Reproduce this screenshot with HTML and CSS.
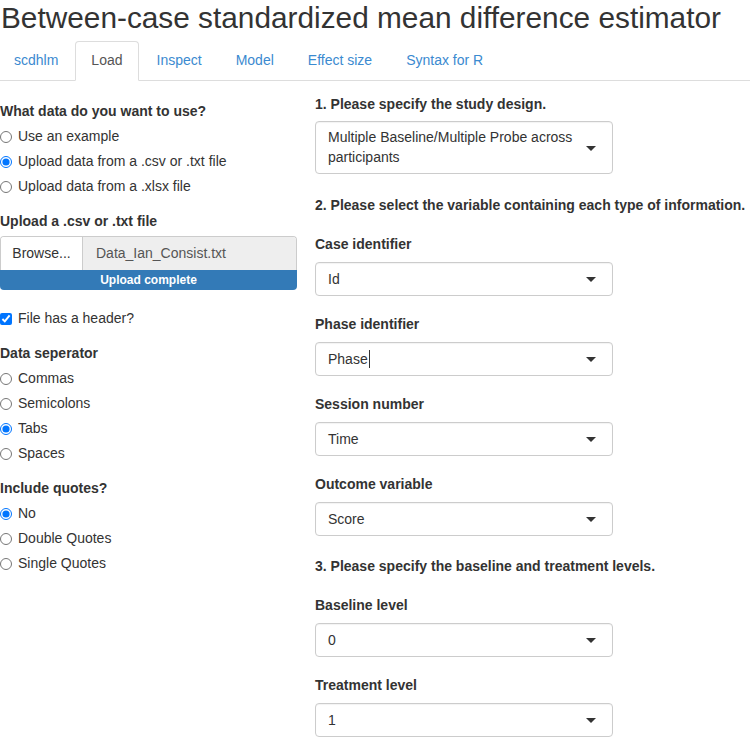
FILE: index.html
```html
<!DOCTYPE html>
<html lang="en">
<head>
  <meta charset="UTF-8">
  <title>Between-case SMD estimator</title>
  <link rel="stylesheet" href="styles.css">
</head>
<body>

  <h1 class="title">Between-case standardized mean difference estimator</h1>

  <!-- Tab bar -->
  <ul class="nav-tabs">
    <li><a href="#">scdhlm</a></li>
    <li class="active"><a href="#">Load</a></li>
    <li><a href="#">Inspect</a></li>
    <li><a href="#">Model</a></li>
    <li><a href="#">Effect size</a></li>
    <li><a href="#">Syntax for R</a></li>
  </ul>

  <div class="tab-content">

    <!-- Left: data source options -->
    <div class="sidebar">
      <div class="form-group">
        <label class="control-label">What data do you want to use?</label>
        <div class="radio"><label><input type="radio" name="source"> Use an example</label></div>
        <div class="radio"><label><input type="radio" name="source" checked> Upload data from a .csv or .txt file</label></div>
        <div class="radio"><label><input type="radio" name="source"> Upload data from a .xlsx file</label></div>
      </div>

      <div class="form-group upload">
        <label class="control-label">Upload a .csv or .txt file</label>
        <div class="file-input">
          <span class="btn-browse">Browse...</span>
          <span class="file-name">Data_Ian_Consist.txt</span>
        </div>
        <div class="progress">Upload complete</div>
      </div>

      <div class="form-group">
        <div class="checkbox"><label><input type="checkbox" checked> File has a header?</label></div>
      </div>

      <div class="form-group">
        <label class="control-label">Data seperator</label>
        <div class="radio"><label><input type="radio" name="sep"> Commas</label></div>
        <div class="radio"><label><input type="radio" name="sep"> Semicolons</label></div>
        <div class="radio"><label><input type="radio" name="sep" checked> Tabs</label></div>
        <div class="radio"><label><input type="radio" name="sep"> Spaces</label></div>
      </div>

      <div class="form-group">
        <label class="control-label">Include quotes?</label>
        <div class="radio"><label><input type="radio" name="quote" checked> No</label></div>
        <div class="radio"><label><input type="radio" name="quote"> Double Quotes</label></div>
        <div class="radio"><label><input type="radio" name="quote"> Single Quotes</label></div>
      </div>
    </div>

    <!-- Right: variable mapping -->
    <div class="main">
      <h4>1. Please specify the study design.</h4>
      <div class="select two-line">
        <span>Multiple Baseline/Multiple Probe across participants</span>
        <i class="caret"></i>
      </div>

      <h4>2. Please select the variable containing each type of information.</h4>

      <label class="control-label">Case identifier</label>
      <div class="select"><span>Id</span><i class="caret"></i></div>

      <label class="control-label">Phase identifier</label>
      <div class="select"><span>Phase<span class="cursor"></span></span><i class="caret"></i></div>

      <label class="control-label">Session number</label>
      <div class="select"><span>Time</span><i class="caret"></i></div>

      <label class="control-label">Outcome variable</label>
      <div class="select"><span>Score</span><i class="caret"></i></div>

      <h4 class="levels">3. Please specify the baseline and treatment levels.</h4>

      <label class="control-label">Baseline level</label>
      <div class="select"><span>0</span><i class="caret"></i></div>

      <label class="control-label">Treatment level</label>
      <div class="select"><span>1</span><i class="caret"></i></div>
    </div>

  </div>

</body>
</html>
```

FILE: styles.css
```css
body {
  font-family: 'Liberation Sans', Arial, sans-serif;
  font-size: 14px;
  line-height: 20px;
  color: #333;
  background: #fff;
  margin: 0;
  overflow: hidden;
}

.title {
  font-size: 29.8px;
  font-weight: normal;
  line-height: 35px;
  margin: 0;
  padding-left: 1px;
  white-space: nowrap;
}

/* tabs */
.nav-tabs {
  list-style: none;
  margin: 6px 0 0;
  padding: 0;
  display: flex;
  border-bottom: 1px solid #ddd;
}

.nav-tabs li {
  margin-right: 2px;
  margin-bottom: -1px;
}

.nav-tabs a {
  display: block;
  padding: 8px 15px 10px;
  line-height: 20px;
  color: #3b8ad0;
  text-decoration: none;
  border: 1px solid transparent;
  border-radius: 4px 4px 0 0;
}

.nav-tabs li:first-child a {
  padding-left: 13px;
  padding-right: 14px;
}

.nav-tabs .active a {
  color: #555;
  border-color: #ddd #ddd transparent;
  background: #fff;
}

/* two columns */
.tab-content {
  display: grid;
  grid-template-columns: 297px 1fr;
  column-gap: 18px;
}

.sidebar {
  padding-top: 20px;
}

.main {
  padding-top: 14px;
}

.form-group {
  margin-bottom: 15px;
}

.form-group.upload {
  margin-bottom: 18px;
}

.control-label {
  display: block;
  font-weight: bold;
  margin-bottom: 5px;
}

.radio, .checkbox {
  line-height: 20px;
  margin-bottom: 5px;
}

.radio label, .checkbox label {
  display: flex;
  align-items: center;
}

.radio input, .checkbox input {
  width: 12px;
  height: 12px;
  margin: 2px 6px 0 0;
}

/* file upload */
.file-input {
  display: flex;
  height: 33px;
  border: 1px solid #ccc;
  border-radius: 4px 4px 0 0;
  border-bottom: none;
  overflow: hidden;
}

.btn-browse {
  width: 81px;
  text-align: center;
  line-height: 32px;
  background: #fff;
  border-right: 1px solid #ccc;
}

.file-name {
  flex: 1;
  line-height: 32px;
  padding-left: 13px;
  background: #eee;
  color: #555;
}

.progress {
  height: 20px;
  background: #337ab7;
  color: #fff;
  font-size: 12px;
  font-weight: bold;
  line-height: 20px;
  text-align: center;
  border-radius: 0 0 4px 4px;
}

/* selectize-like inputs */
h4 {
  font-size: 14px;
  font-weight: bold;
  margin: 0 0 8px;
  line-height: 18px;
}

h4.levels {
  margin-top: 21px;
}

.main .control-label {
  margin-bottom: 8px;
}

.select {
  position: relative;
  width: 298px;
  box-sizing: border-box;
  min-height: 34px;
  border: 1px solid #ccc;
  border-radius: 4px;
  padding: 6px 30px 6px 12px;
  margin-bottom: 18px;
  line-height: 20px;
  box-shadow: inset 0 1px 1px rgba(0,0,0,0.05);
}

.select.two-line {
  padding-top: 5px;
  padding-bottom: 6px;
  margin-bottom: 22px;
}

.main h4 + .control-label {
  margin-top: 20px;
}

.caret {
  position: absolute;
  right: 16px;
  top: 50%;
  margin-top: -2px;
  border-top: 5px solid #333;
  border-left: 5px solid transparent;
  border-right: 5px solid transparent;
}

.cursor {
  display: inline-block;
  width: 1px;
  height: 18px;
  margin-left: 1px;
  background: #333;
  vertical-align: -4px;
}
```
